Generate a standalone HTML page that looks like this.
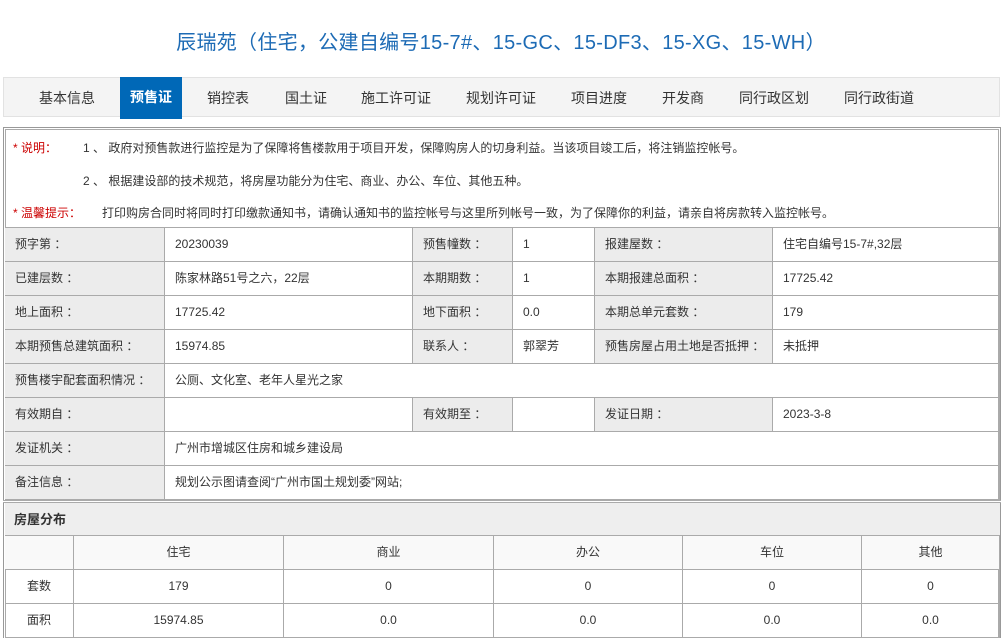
<!DOCTYPE html>
<html><head><meta charset="utf-8"><style>
*{margin:0;padding:0;box-sizing:border-box}
body{width:1002px;height:638px;background:#fff;font-family:"Liberation Sans","Noto Sans CJK SC",sans-serif;font-size:12px;color:#333;position:relative;overflow:hidden}
.a{position:absolute}
h1{position:absolute;left:0;width:1002px;top:26px;text-align:center;font-size:20px;font-weight:normal;color:#1d6bb5;letter-spacing:0.3px}
.nav{left:3px;top:77px;width:997px;height:40px;background:#f4f4f4;border:1px solid #e2e2e2}
.nav span{position:absolute;top:10px;font-size:14px;color:#333}
.act{left:120px;top:77px;width:62px;height:42px;background:#0068b7;color:#fff;font-size:14px;font-weight:bold;text-align:center;line-height:40px}
.box{left:3px;top:127px;width:998px;height:511px;border:1px solid #999;border-bottom:none}
.inner{left:5px;top:129px;width:994px;height:509px;border:1px solid #aaa;border-bottom:none}
.red{color:#c00}
.c{position:absolute;border-right:1px solid #aaa;border-bottom:1px solid #aaa;padding-left:10px;line-height:33px}
.l{background:#ececec}
.t{position:absolute;border-right:1px solid #aaa;border-bottom:1px solid #aaa;text-align:center;line-height:33px}
</style></head><body>
<h1>辰瑞苑（住宅，公建自编号15-7#、15-GC、15-DF3、15-XG、15-WH）</h1>
<div class="a nav">
<span style="left:35px">基本信息</span>
<span style="left:203px">销控表</span>
<span style="left:281px">国土证</span>
<span style="left:357px">施工许可证</span>
<span style="left:462px">规划许可证</span>
<span style="left:567px">项目进度</span>
<span style="left:658px">开发商</span>
<span style="left:735px">同行政区划</span>
<span style="left:840px">同行政街道</span>
</div>
<div class="a act">预售证</div>
<div class="a box"></div>
<div class="a inner"></div>
<div class="a" style="left:13px;top:139px"><span class="red">* 说明：</span></div>
<div class="a" style="left:83px;top:139px">1 、 政府对预售款进行监控是为了保障将售楼款用于项目开发，保障购房人的切身利益。当该项目竣工后，将注销监控帐号。</div>
<div class="a" style="left:83px;top:172px">2 、 根据建设部的技术规范，将房屋功能分为住宅、商业、办公、车位、其他五种。</div>
<div class="a" style="left:13px;top:204px"><span class="red">* 温馨提示：</span></div>
<div class="a" style="left:102px;top:204px">打印购房合同时将同时打印缴款通知书，请确认通知书的监控帐号与这里所列帐号一致，为了保障你的利益，请亲自将房款转入监控帐号。</div>
<div class="a" style="left:5px;top:227px;width:995px;border-top:1px solid #aaa"></div>

<div class="c l" style="left:5px;top:228px;width:160px;height:34px">预字第 ：</div>
<div class="c" style="left:165px;top:228px;width:248px;height:34px">20230039</div>
<div class="c l" style="left:413px;top:228px;width:100px;height:34px">预售幢数 ：</div>
<div class="c" style="left:513px;top:228px;width:82px;height:34px">1</div>
<div class="c l" style="left:595px;top:228px;width:178px;height:34px">报建屋数 ：</div>
<div class="c" style="left:773px;top:228px;width:227px;height:34px">住宅自编号15-7#,32层</div>

<div class="c l" style="left:5px;top:262px;width:160px;height:34px">已建层数 ：</div>
<div class="c" style="left:165px;top:262px;width:248px;height:34px">陈家林路51号之六，22层</div>
<div class="c l" style="left:413px;top:262px;width:100px;height:34px">本期期数 ：</div>
<div class="c" style="left:513px;top:262px;width:82px;height:34px">1</div>
<div class="c l" style="left:595px;top:262px;width:178px;height:34px">本期报建总面积 ：</div>
<div class="c" style="left:773px;top:262px;width:227px;height:34px">17725.42</div>

<div class="c l" style="left:5px;top:296px;width:160px;height:34px">地上面积 ：</div>
<div class="c" style="left:165px;top:296px;width:248px;height:34px">17725.42</div>
<div class="c l" style="left:413px;top:296px;width:100px;height:34px">地下面积 ：</div>
<div class="c" style="left:513px;top:296px;width:82px;height:34px">0.0</div>
<div class="c l" style="left:595px;top:296px;width:178px;height:34px">本期总单元套数 ：</div>
<div class="c" style="left:773px;top:296px;width:227px;height:34px">179</div>

<div class="c l" style="left:5px;top:330px;width:160px;height:34px">本期预售总建筑面积 ：</div>
<div class="c" style="left:165px;top:330px;width:248px;height:34px">15974.85</div>
<div class="c l" style="left:413px;top:330px;width:100px;height:34px">联系人 ：</div>
<div class="c" style="left:513px;top:330px;width:82px;height:34px">郭翠芳</div>
<div class="c l" style="left:595px;top:330px;width:178px;height:34px">预售房屋占用土地是否抵押 ：</div>
<div class="c" style="left:773px;top:330px;width:227px;height:34px">未抵押</div>

<div class="c l" style="left:5px;top:364px;width:160px;height:34px">预售楼宇配套面积情况 ：</div>
<div class="c" style="left:165px;top:364px;width:835px;height:34px">公厕、文化室、老年人星光之家</div>

<div class="c l" style="left:5px;top:398px;width:160px;height:34px">有效期自 ：</div>
<div class="c" style="left:165px;top:398px;width:248px;height:34px"></div>
<div class="c l" style="left:413px;top:398px;width:100px;height:34px">有效期至 ：</div>
<div class="c" style="left:513px;top:398px;width:82px;height:34px"></div>
<div class="c l" style="left:595px;top:398px;width:178px;height:34px">发证日期 ：</div>
<div class="c" style="left:773px;top:398px;width:227px;height:34px">2023-3-8</div>

<div class="c l" style="left:5px;top:432px;width:160px;height:34px">发证机关 ：</div>
<div class="c" style="left:165px;top:432px;width:835px;height:34px">广州市增城区住房和城乡建设局</div>

<div class="c l" style="left:5px;top:466px;width:160px;height:34px">备注信息 ：</div>
<div class="c" style="left:165px;top:466px;width:835px;height:34px">规划公示图请查阅“广州市国土规划委”网站;</div>

<div class="a" style="left:3px;top:500px;width:998px;height:3px;border-top:1px solid #aaa;border-bottom:1px solid #aaa;background:#fff"></div>
<div class="a" style="left:5px;top:503px;width:995px;height:33px;background:#eee;border-bottom:1px solid #aaa;padding-left:9px;line-height:33px;font-size:13px;font-weight:bold">房屋分布</div>

<div class="t" style="left:5px;top:536px;width:69px;height:34px;background:#f9f9f9"></div>
<div class="t" style="left:74px;top:536px;width:210px;height:34px;background:#f9f9f9">住宅</div>
<div class="t" style="left:284px;top:536px;width:210px;height:34px;background:#f9f9f9">商业</div>
<div class="t" style="left:494px;top:536px;width:189px;height:34px;background:#f9f9f9">办公</div>
<div class="t" style="left:683px;top:536px;width:179px;height:34px;background:#f9f9f9">车位</div>
<div class="t" style="left:862px;top:536px;width:138px;height:34px;background:#f9f9f9">其他</div>

<div class="t" style="left:5px;top:570px;width:69px;height:34px">套数</div>
<div class="t" style="left:74px;top:570px;width:210px;height:34px">179</div>
<div class="t" style="left:284px;top:570px;width:210px;height:34px">0</div>
<div class="t" style="left:494px;top:570px;width:189px;height:34px">0</div>
<div class="t" style="left:683px;top:570px;width:179px;height:34px">0</div>
<div class="t" style="left:862px;top:570px;width:138px;height:34px">0</div>

<div class="t" style="left:5px;top:604px;width:69px;height:34px">面积</div>
<div class="t" style="left:74px;top:604px;width:210px;height:34px">15974.85</div>
<div class="t" style="left:284px;top:604px;width:210px;height:34px">0.0</div>
<div class="t" style="left:494px;top:604px;width:189px;height:34px">0.0</div>
<div class="t" style="left:683px;top:604px;width:179px;height:34px">0.0</div>
<div class="t" style="left:862px;top:604px;width:138px;height:34px">0.0</div>
</body></html>
